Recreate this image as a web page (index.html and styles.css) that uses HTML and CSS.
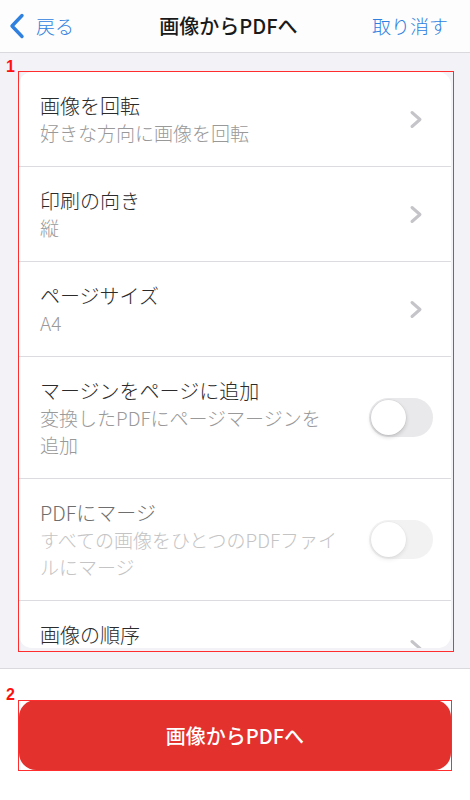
FILE: index.html
```html
<!DOCTYPE html>
<html lang="ja">
<head>
<meta charset="utf-8">
<title>画像からPDFへ</title>
<link rel="stylesheet" href="styles.css">
</head>
<body>
<div class="screen">
  <header class="nav">
    <div class="nav-back">
      <svg class="back-icon" width="16" height="26" viewBox="0 0 16 26"><polyline points="13,2.5 3,13 13,23.5" fill="none" stroke="currentColor" stroke-width="3.4" stroke-linecap="round" stroke-linejoin="round"/></svg>
      <span>戻る</span>
    </div>
    <div class="nav-title">画像からPDFへ</div>
    <div class="nav-cancel">取り消す</div>
  </header>

  <main class="content">
    <div class="card">
      <div class="row">
        <div class="text">
          <div class="title">画像を回転</div>
          <div class="sub">好きな方向に画像を回転</div>
        </div>
        <svg class="chev" width="14" height="19" viewBox="0 0 14 19"><polyline points="3,2.5 11,9.5 3,16.5" fill="none" stroke="currentColor" stroke-width="3" stroke-linecap="round" stroke-linejoin="round"/></svg>
      </div>
      <div class="row">
        <div class="text">
          <div class="title">印刷の向き</div>
          <div class="sub">縦</div>
        </div>
        <svg class="chev" width="14" height="19" viewBox="0 0 14 19"><polyline points="3,2.5 11,9.5 3,16.5" fill="none" stroke="currentColor" stroke-width="3" stroke-linecap="round" stroke-linejoin="round"/></svg>
      </div>
      <div class="row">
        <div class="text">
          <div class="title">ページサイズ</div>
          <div class="sub">A4</div>
        </div>
        <svg class="chev" width="14" height="19" viewBox="0 0 14 19"><polyline points="3,2.5 11,9.5 3,16.5" fill="none" stroke="currentColor" stroke-width="3" stroke-linecap="round" stroke-linejoin="round"/></svg>
      </div>
      <div class="row">
        <div class="text narrow">
          <div class="title">マージンをページに追加</div>
          <div class="sub">変換したPDFにページマージンを<br>追加</div>
        </div>
        <div class="toggle"><div class="knob"></div></div>
      </div>
      <div class="row disabled">
        <div class="text narrow">
          <div class="title">PDFにマージ</div>
          <div class="sub">すべての画像をひとつのPDFファイ<br>ルにマージ</div>
        </div>
        <div class="toggle"><div class="knob"></div></div>
      </div>
      <div class="row">
        <div class="text">
          <div class="title">画像の順序</div>
          <div class="sub">&nbsp;</div>
        </div>
        <svg class="chev" width="14" height="19" viewBox="0 0 14 19"><polyline points="3,2.5 11,9.5 3,16.5" fill="none" stroke="currentColor" stroke-width="3" stroke-linecap="round" stroke-linejoin="round"/></svg>
      </div>
    </div>
  </main>

  <footer class="footer">
    <button class="primary">画像からPDFへ</button>
  </footer>

  <div class="mark mark-1"><span class="mark-num">1</span></div>
  <div class="mark mark-2"><span class="mark-num">2</span></div>
</div>
</body>
</html>
```

FILE: styles.css
```css
* { box-sizing: border-box; }

html, body {
  margin: 0;
  padding: 0;
}

body {
  width: 470px;
  height: 800px;
  overflow: hidden;
  font-family: "Noto Sans CJK JP", "Noto Sans", sans-serif;
  background: #ffffff;
}

.screen {
  position: relative;
  width: 470px;
  height: 800px;
  display: flex;
  flex-direction: column;
}

.nav {
  height: 53px;
  flex: none;
  background: #fdfdfd;
  border-bottom: 1px solid #d9d9de;
  display: grid;
  grid-template-columns: 1fr auto 1fr;
  align-items: center;
  padding: 0 22px 0 9px;
}

.nav-back {
  display: flex;
  align-items: center;
  gap: 11px;
  color: #2f80df;
  font-size: 19px;
  line-height: 28px;
  font-weight: 300;
}

.back-icon { display: block; }

.nav-title {
  font-size: 20px;
  font-weight: 500;
  color: #1a1a1a;
  line-height: 28px;
}

.nav-cancel {
  justify-self: end;
  color: #2f80df;
  font-size: 19px;
  line-height: 28px;
  font-weight: 300;
}

.content {
  flex: 1;
  min-height: 0;
  background: #f2f2f7;
  padding: 19px 19px 20px 19px;
  display: flex;
  flex-direction: column;
}

.card {
  flex: 1;
  min-height: 0;
  background: #ffffff;
  border-radius: 13px;
  overflow: hidden;
}

.row {
  display: flex;
  align-items: center;
  padding: 20px 18px 20px 21px;
  border-bottom: 1px solid #dcdce0;
}

.text {
  flex: 1;
  min-width: 0;
}

.text.narrow {
  flex: none;
  width: 320px;
  margin-right: auto;
}

.title {
  font-size: 20px;
  line-height: 27px;
  color: #2b2b2b;
  font-weight: 300;
}

.sub {
  font-size: 19px;
  line-height: 27px;
  color: #999999;
  font-weight: 300;
}

.chev {
  display: block;
  flex: none;
  color: #c5c5c9;
  margin-right: 10px;
}

.toggle {
  flex: none;
  width: 64px;
  height: 39px;
  border-radius: 20px;
  background: #e9e9eb;
  padding: 2px;
}

.knob {
  width: 35px;
  height: 35px;
  border-radius: 50%;
  background: #ffffff;
  box-shadow: 0 2px 4px rgba(0, 0, 0, 0.18), 0 0 0 0.5px rgba(0, 0, 0, 0.06);
}

.row.disabled .title { color: #6e6e6e; }
.row.disabled .sub { color: #c4c4c4; }
.row.disabled .toggle { opacity: 0.55; }

.footer {
  flex: none;
  height: 132px;
  background: #ffffff;
  border-top: 1px solid #d9d9de;
  padding: 31px 19px 30px 19px;
}

.primary {
  display: block;
  width: 100%;
  height: 70px;
  border: none;
  border-radius: 17px;
  background: #e3322e;
  color: #ffffff;
  font-family: "Noto Sans CJK JP", "Noto Sans", sans-serif;
  font-size: 20px;
  font-weight: 500;
}

.mark {
  position: absolute;
  border: 1px solid #ff2d2d;
  pointer-events: none;
}

.mark-1 {
  left: 18px;
  top: 71px;
  width: 436px;
  height: 581px;
}

.mark-2 {
  left: 18px;
  top: 700px;
  width: 434px;
  height: 71px;
}

.mark-num {
  position: absolute;
  color: #ff1010;
  font-family: "Liberation Sans", Arial, sans-serif;
  font-weight: 700;
  font-size: 16px;
  line-height: 16px;
  top: -13px;
  left: -13px;
}

.mark-2 .mark-num {
  top: -14px;
}
```
